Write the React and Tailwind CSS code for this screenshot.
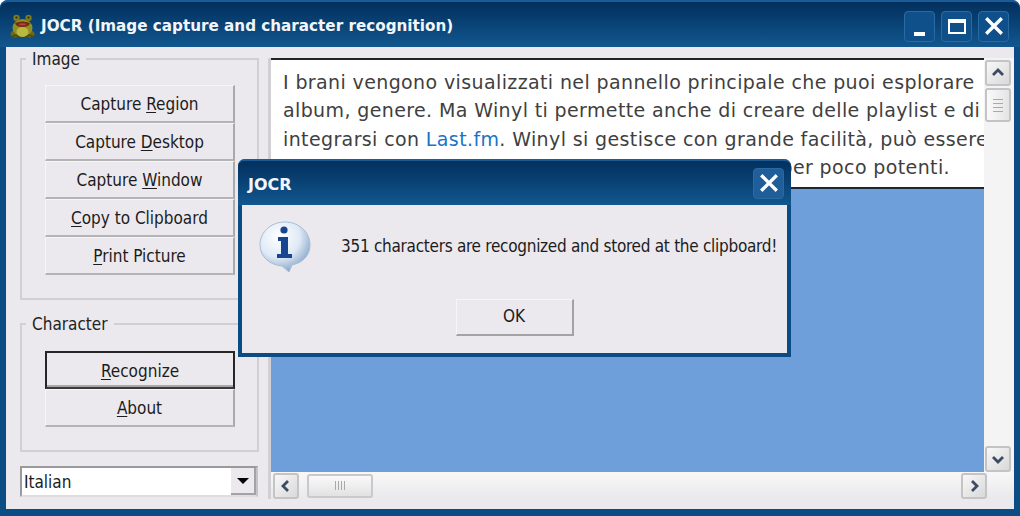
import React from 'react';

const uiFont = "[font-family:'DejaVu_Sans',sans-serif] font-stretch-condensed";

const FrogIcon = () => (
    <svg width="27" height="27" viewBox="0 0 27 27" className="shrink-0">
        <ellipse cx="6" cy="21" rx="4.5" ry="3.5" fill="#6b6818" />
        <ellipse cx="21" cy="21" rx="4.5" ry="3.5" fill="#6b6818" />
        <ellipse cx="13.5" cy="15" rx="10" ry="9" fill="#8f8f24" />
        <circle cx="7.5" cy="5" r="3.2" fill="#7c7a1c" />
        <circle cx="19.5" cy="5" r="3.2" fill="#7c7a1c" />
        <ellipse cx="13.5" cy="19" rx="6" ry="5" fill="#b9b93e" />
        <path d="M6 10 Q13.5 7 21 10 Q20 14 13.5 14 Q7 14 6 10Z" fill="#6e2a16" />
        <path d="M9 11 Q13.5 9.5 18 11 Q16 12.5 13.5 12.5 Q11 12.5 9 11Z" fill="#b9432e" />
        <circle cx="7.5" cy="4.5" r="1" fill="#2b2a10" />
        <circle cx="19.5" cy="4.5" r="1" fill="#2b2a10" />
        <path d="M2 24 L7 22 L11 25 M25 24 L20 22 L16 25" stroke="#4d4b12" strokeWidth="1.6" fill="none" />
    </svg>
);

const InfoIcon = () => (
    <svg width="52" height="52" viewBox="0 0 52 52" className="shrink-0">
        <defs>
            <radialGradient id="bubble" cx="38%" cy="30%" r="75%">
                <stop offset="0%" stopColor="#ffffff" />
                <stop offset="55%" stopColor="#dfeaf6" />
                <stop offset="100%" stopColor="#7fa0c4" />
            </radialGradient>
        </defs>
        <path d="M26 1 C40 1 51 11 51 24 C51 35 43 42 33 44 L30 51 L23 45 C11 44 1 36 1 24 C1 11 12 1 26 1Z" fill="url(#bubble)" stroke="#a9bdd4" strokeWidth="1" />
        <circle cx="25" cy="9" r="3.6" fill="#17458f" />
        <path d="M19 16 H29 V33 H33 V37 H18 V33 H22 V20 H19Z" fill="#17458f" />
    </svg>
);

const CloseGlyph = ({ size }) => (
    <svg width={size} height={size} viewBox="0 0 18 18">
        <path d="M2 2 L16 16 M16 2 L2 16" stroke="#ffffff" strokeWidth="3" />
    </svg>
);

const TitleButton = ({ children, className }) => (
    <div className={`flex h-[31px] w-[31px] items-center justify-center rounded-[4px] border border-[#2a6aa3] ${className || 'bg-[#10508a]'}`}>
        {children}
    </div>
);

const Label = ({ text, mark }) => {
    const at = text.indexOf(mark);
    return (
        <span>
            {text.slice(0, at)}
            <span className="underline underline-offset-2">{mark}</span>
            {text.slice(at + 1)}
        </span>
    );
};

const PanelButton = ({ text, mark, isDefault }) => (
    <button
        className={`flex h-[38px] w-[190px] shrink-0 items-center justify-center bg-[#ebe9ed] pt-[3px] text-[17px] text-[#1c1c1c] ${
            isDefault
                ? 'border-2 border-[#262626] border-b-[#3a3a3a] shadow-[inset_0_-2px_0_#a8a8a8]'
                : 'border-t border-l border-t-[#f6f5f7] border-l-[#f6f5f7] border-r-2 border-b-2 border-r-[#a9a9ac] border-b-[#b4b4b7]'
        }`}
    >
        <Label text={text} mark={mark} />
    </button>
);

const GroupBox = ({ title, height, children }) => (
    <div className={`relative w-[239px] border-2 border-[#d1cfd3] ${height}`}>
        <span className="absolute -top-[12px] left-[4px] bg-[#ebe9ed] px-[6px] text-[17px] leading-[22px] text-[#222]">{title}</span>
        {children}
    </div>
);

const ScrollButton = ({ dir }) => {
    const paths = {
        up: 'M3 10 L8 5 L13 10',
        down: 'M3 6 L8 11 L13 6',
        left: 'M10 3 L5 8 L10 13',
        right: 'M6 3 L11 8 L6 13',
    };
    return (
        <div className="flex h-[26px] w-[26px] shrink-0 items-center justify-center rounded-[3px] border-2 border-[#c4c4c6] bg-gradient-to-br from-[#f8f8f8] to-[#d9d9db]">
            <svg width="16" height="16" viewBox="0 0 16 16">
                <path d={paths[dir]} stroke="#3d4a63" strokeWidth="2.8" fill="none" />
            </svg>
        </div>
    );
};

const Grip = ({ vertical }) => (
    <div className={`flex ${vertical ? 'flex-col gap-[3px]' : 'gap-[2px]'}`}>
        {[0, 1, 2, 3].map((i) => (
            <div key={i} className={vertical ? 'h-[1px] w-[10px] bg-[#a9a9a9]' : 'h-[9px] w-[1px] bg-[#a9a9a9]'} />
        ))}
    </div>
);

export default function App() {
    return (
        <div className={`relative flex h-[516px] w-[1020px] flex-col overflow-hidden bg-white ${uiFont}`}>
            <div className="flex h-full flex-col rounded-t-[8px] bg-[#0c4c85]">
                {/* Title bar */}
                <div className="flex h-[47px] shrink-0 items-center rounded-t-[8px] border-t-2 border-[#1a5c98] bg-gradient-to-b from-[#03305e] to-[#12578f] pl-[9px] pr-[11px] pt-[3px]">
                    <FrogIcon />
                    <span className="ml-[5px] flex-1 whitespace-nowrap text-[15.2px] font-bold text-[#f2f6fa] font-stretch-normal">
                        JOCR (Image capture and character recognition)
                    </span>
                    <div className="flex gap-[6px]">
                        <TitleButton>
                            <div className="mt-[15px] h-[4px] w-[11px] bg-white" />
                        </TitleButton>
                        <TitleButton>
                            <div className="h-[15px] w-[18px] border-2 border-t-[4px] border-white" />
                        </TitleButton>
                        <TitleButton>
                            <CloseGlyph size={20} />
                        </TitleButton>
                    </div>
                </div>

                {/* Window body */}
                <div className="mx-[6px] flex h-[462px] shrink-0 bg-[#ebe9ed] pl-[14px] pt-[11px]">
                    <div className="flex w-[239px] shrink-0 flex-col">
                        <GroupBox title="Image" height="h-[242px]">
                            <div className="ml-[23px] mt-[25px] flex flex-col">
                                <PanelButton text="Capture Region" mark="R" />
                                <PanelButton text="Capture Desktop" mark="D" />
                                <PanelButton text="Capture Window" mark="W" />
                                <PanelButton text="Copy to Clipboard" mark="C" />
                                <PanelButton text="Print Picture" mark="P" />
                            </div>
                        </GroupBox>
                        <div className="mt-[23px]">
                            <GroupBox title="Character" height="h-[129px]">
                                <div className="ml-[23px] mt-[26px] flex flex-col">
                                    <PanelButton text="Recognize" mark="R" isDefault />
                                    <PanelButton text="About" mark="A" />
                                </div>
                            </GroupBox>
                        </div>
                        <div className="mt-[14px] flex h-[31px] w-[238px] items-center justify-between border-2 border-[#9a9a9c] border-b-[#ddd] border-r-[#c4c4c6] bg-white pl-[2px]">
                            <span className="pt-[3px] text-[17px] text-[#1c1c1c]">Italian</span>
                            <div className="flex h-full w-[25px] items-center justify-center border-r-2 border-b-2 border-[#a3a3a6] bg-[#ebe9ed]">
                                <div className="h-0 w-0 border-x-[6px] border-t-[6px] border-x-transparent border-t-black" />
                            </div>
                        </div>
                    </div>

                    {/* Viewer */}
                    <div className="ml-[9px] flex h-[441px] flex-1 flex-col border-l-[3px] border-[#d1cfd3] bg-[#f4f4f5]">
                        <div className="flex h-[414px] shrink-0">
                            <div className="flex w-[713px] shrink-0 flex-col bg-[#6e9fda]">
                                <div className="h-[131px] overflow-hidden border-y-2 border-t-[#222] border-b-[#1d2733] bg-white pl-[12px] pt-[8px] text-[19px] leading-[28.3px] tracking-[0.38px] whitespace-nowrap text-[#3f3f3f] font-stretch-normal">
                                    <div>I brani vengono visualizzati nel pannello principale che puoi esplorare</div>
                                    <div>album, genere. Ma Winyl ti permette anche di creare delle playlist e di</div>
                                    <div>integrarsi con <span className="text-[#1a73c7]">Last.fm</span>. Winyl si gestisce con grande facilità, può essere</div>
                                    <div className="pr-[34px] text-right">per poco potenti.</div>
                                </div>
                            </div>
                            <div className="flex flex-1 flex-col pl-[1px] pr-[3px] pt-[2px]">
                                <ScrollButton dir="up" />
                                <div className="mt-[2px] flex h-[34px] w-[26px] items-center justify-center rounded-[3px] border-2 border-[#c4c4c6] bg-gradient-to-r from-[#fafafa] to-[#e4e4e6]">
                                    <Grip vertical />
                                </div>
                                <div className="flex-1" />
                                <ScrollButton dir="down" />
                            </div>
                        </div>
                        <div className="flex h-[27px] items-center bg-gradient-to-b from-[#f8f8f8] to-[#e9e9eb] pl-[2px]">
                            <ScrollButton dir="left" />
                            <div className="ml-[8px] flex h-[24px] w-[66px] items-center justify-center rounded-[3px] border-2 border-[#c9c9cb] bg-gradient-to-b from-[#fafafa] to-[#e2e2e4]">
                                <Grip />
                            </div>
                            <div className="flex-1" />
                            <div className="mr-[27px]">
                                <ScrollButton dir="right" />
                            </div>
                        </div>
                    </div>
                </div>
            </div>

            {/* Message dialog */}
            <div className="absolute left-[238px] top-[159px] flex h-[198px] w-[553px] flex-col rounded-t-[7px] border-x-4 border-b-4 border-[#0c4c85] bg-[#ebe9ed]">
                <div className="-mx-[4px] flex h-[46px] shrink-0 items-center justify-between rounded-t-[7px] border-t-2 border-[#1a5c98] bg-gradient-to-b from-[#03305e] to-[#12578f] pl-[10px] pr-[7px]">
                    <span className="mt-[3px] text-[16px] font-bold text-[#f2f6fa] font-stretch-normal">JOCR</span>
                    <TitleButton className="bg-[#1f5e98]">
                        <CloseGlyph size={20} />
                    </TitleButton>
                </div>
                <div className="flex items-center pl-[17px] pt-[16px]">
                    <InfoIcon />
                    <span className="ml-[30px] -mt-[1px] whitespace-nowrap text-[17px] tracking-[-0.28px] text-[#1c1c1c]">
                        351 characters are recognized and stored at the clipboard!
                    </span>
                </div>
                <div className="mt-[26px] flex justify-center">
                    <button className="h-[37px] w-[118px] border-l border-t border-[#f6f5f7] border-r-2 border-b-2 border-r-[#a3a3a6] border-b-[#a3a3a6] bg-[#ebe9ed] pb-[1px] text-[17px] text-[#1c1c1c]">
                        OK
                    </button>
                </div>
            </div>
        </div>
    );
}
